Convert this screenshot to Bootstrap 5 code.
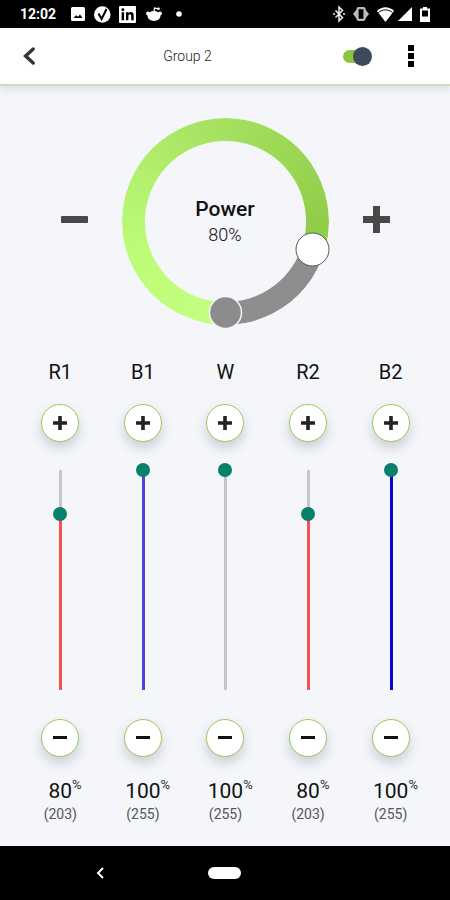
<!DOCTYPE html>
<html lang="en">
<head>
<meta charset="utf-8">
<meta name="viewport" content="width=device-width, initial-scale=1">
<title>Group 2</title>
<link href="https://cdn.jsdelivr.net/npm/bootstrap@5.3.0/dist/css/bootstrap.min.css" rel="stylesheet">
<style>
  body { font-family: Roboto, "Liberation Sans", sans-serif; background: #f4f6fa; color: #111; }
  svg { display: block; overflow: visible; }
  .status-bar { height: 28px; padding: 0 20px; background: #000; color: #fff; }
  .status-time { font-size: 14px; font-weight: 700; line-height: 20px; width: 51px; }
  .app-header { height: 58px; padding: 0 22px 0 12px; background: #fff; border-bottom: 2px solid #cfdcba; box-shadow: 0 3px 8px rgba(60, 80, 90, .14); }
  .icon-btn { width: 34px; height: 40px; }
  .group-title { font-size: 14px; font-weight: 300; line-height: 20px; color: #222; }
  .power-switch { appearance: none; position: relative; width: 26px; height: 13px; margin: 0 25px 0 14px; border-radius: 7px; background: #8bc53f; }
  .power-switch::before { content: ""; position: absolute; top: -3px; right: -3px; width: 19px; height: 19px; border-radius: 50%; background: #3c4a5b; }
  .power-switch:not(:checked) { background: #bbb; }
  .power-switch:not(:checked)::before { right: 10px; }
  .dial-row { padding: 32px 50px 0; }
  .step-btn { width: 48px; height: 48px; margin-bottom: 4px; }
  .dial { position: relative; width: 207px; height: 207px; }
  .dial::before { content: ""; position: absolute; inset: 0; border-radius: 50%;
    background: conic-gradient(from 180deg, #c5ff82 0, #bcfc77 20%, #a5e060 50%, #8dca45 80%, #8e8e8e 80%);
    -webkit-mask: radial-gradient(closest-side, transparent 80px, #000 81px);
    mask: radial-gradient(closest-side, transparent 80px, #000 81px); }
  .dial-knobs { position: absolute; inset: 0; }
  .dial-name { font-size: 21px; font-weight: 500; line-height: 28px; }
  .dial-value { font-size: 18px; font-weight: 300; line-height: 24px; margin-bottom: 2px; }
  .channels { padding: 33px 18px 0 19px; }
  .channel-name { font-size: 20px; line-height: 28px; margin-bottom: 18px; font-weight: 400; }
  .round-btn { width: 38px; height: 38px; border: 1px solid #9bca5c; border-radius: 50%; background: #fff; box-shadow: 0 6px 12px rgba(40, 50, 70, .2); }
  .slider-box { height: 234px; width: 38px; margin: 21px 0 22px; }
  .slider { appearance: none; flex: none; width: 234px; height: 14px; margin: 0; transform: rotate(-90deg);
    background: linear-gradient(to right, var(--tint) var(--level), #c6c6c8 var(--level)) center / 220px 3px no-repeat; }
  .slider::-webkit-slider-runnable-track { height: 14px; background: transparent; }
  .slider::-webkit-slider-thumb { appearance: none; width: 14px; height: 14px; border: 0; border-radius: 50%; background: #07806c; }
  .slider::-moz-range-thumb { width: 14px; height: 14px; border: 0; border-radius: 50%; background: #07806c; }
  .tint-red { --tint: #f4514f; }
  .tint-blue { --tint: #4b45e2; }
  .tint-white { --tint: #c6c6c8; }
  .tint-deep { --tint: #0b06d2; }
  .percent { font-size: 21px; font-weight: 400; line-height: 26px; margin-top: 21px; }
  .percent sup { display: inline-block; width: 0; font-size: 13px; line-height: 13px; top: -9px; color: #333; white-space: nowrap; }
  .raw-value { font-size: 14px; font-weight: 400; line-height: 20px; color: #555; }
  .system-nav { height: 54px; padding: 0 37px; background: #000; }
  .home-pill { width: 33px; height: 12px; border-radius: 6px; background: #fff; }
</style>
<script src="https://cdn.jsdelivr.net/npm/bootstrap@5.3.0/dist/js/bootstrap.bundle.min.js"></script>
</head>
<body>
<div class="d-flex flex-column min-vh-100">
  <div class="status-bar d-flex align-items-center">
    <span class="status-time">12:02</span>
    <svg width="14" height="14" viewBox="0 0 14 14" aria-hidden="true"><rect width="14" height="14" rx="1.5" fill="#fff"/><path d="M2.500 11l2.500-2.800 2 1.600 2-2.200L11.500 11z" fill="#000"/></svg>
    <svg class="ms-2" width="18" height="17" viewBox="-1 0 18 17" aria-hidden="true"><circle cx="8.300" cy="8.500" r="8.300" fill="#fff"/><path d="M4.500 7.500L7.600 13 12.500 3" fill="none" stroke="#000" stroke-width="2"/></svg>
    <svg class="ms-2" width="17" height="17" viewBox="0 0 17 17" aria-hidden="true"><rect width="17" height="17" rx="1" fill="#fff"/><path d="M2.600 6.300h2.500v8H2.600zM7 6.300h2.300v1.100c.5-.8 1.300-1.300 2.500-1.300 2.100 0 2.900 1.300 2.900 3.600v4.600h-2.500v-4.200c0-1.100-.3-1.900-1.300-1.900s-1.500.7-1.500 1.900v4.200H7z" fill="#000"/><circle cx="3.850" cy="3.800" r="1.450" fill="#000"/></svg>
    <svg class="ms-2" width="18" height="16" viewBox="-2 0 18 16" aria-hidden="true"><ellipse cx="8" cy="10" rx="6.500" ry="5" fill="#fff"/><circle cx="2" cy="7.500" r="2" fill="#fff"/><circle cx="14" cy="7.500" r="2" fill="#fff"/><path d="M8 6l.5-4 4 .8" fill="none" stroke="#fff" stroke-width="1.300"/><circle cx="12.500" cy="2.800" r="1.300" fill="#fff"/></svg>
    <svg class="ms-3" width="6" height="6" viewBox="5 0 6 6" aria-hidden="true"><circle cx="6" cy="3" r="2.800" fill="#fff"/></svg>
    <svg class="ms-auto" width="12" height="16" viewBox="0 0 12 16" aria-hidden="true"><path d="M2.500 4.500l7 7L6 15V1l3.500 3.500-7 7" fill="none" stroke="#eee" stroke-width="1.500"/><circle cx="1" cy="8" r="1" fill="#eee"/><circle cx="11" cy="8" r="1" fill="#eee"/></svg>
    <svg class="ms-2" width="16" height="14" viewBox="0 0 16 14" aria-hidden="true"><path d="M0 7l4-5v10zM16 7l-4-5v10z" fill="#bbb"/><rect x="4.500" y="1.200" width="7" height="11.600" rx="1" fill="#000" stroke="#bbb" stroke-width="2.200"/></svg>
    <svg class="ms-2" width="17" height="15" viewBox="0 0 17 15" aria-hidden="true"><path d="M0 4C5-1 12-1 17 4L8.500 15z" fill="#fff"/><path d="M1.500 5.500C5.500 2 11.500 2 15.500 5.500" fill="none" stroke="#000" stroke-width="1"/></svg>
    <svg class="ms-1" width="14" height="14" viewBox="1 0 14 14" aria-hidden="true"><path d="M15 0v14H1z" fill="#fff"/></svg>
    <svg class="ms-2" width="10" height="15" viewBox="0 0 10 15" aria-hidden="true"><path d="M3 0h4v1.500h3V15H0V1.500h3z" fill="#fff"/><rect x="2" y="3.500" width="6" height="6" fill="#000"/></svg>
  </div>

  <header class="app-header d-flex align-items-center">
    <button class="btn icon-btn border-0 p-0 d-flex align-items-center justify-content-center" type="button" aria-label="Back">
      <svg width="12" height="18" viewBox="0 0 12 18"><path d="M10.200 2L2.600 9l7.600 7" fill="none" stroke="#333" stroke-width="3.400" stroke-linecap="round"/></svg>
    </button>
    <h1 class="group-title flex-grow-1 text-center m-0">Group 2</h1>
    <input class="power-switch" type="checkbox" role="switch" aria-label="Group on or off" checked>
    <button class="btn icon-btn border-0 p-0 d-flex align-items-center justify-content-center" type="button" aria-label="More options">
      <svg width="6" height="22" viewBox="0 0 6 22"><path d="M0 0h6v6H0zM0 8h6v6H0zM0 16h6v6H0z" fill="#000"/></svg>
    </button>
  </header>

  <main class="flex-grow-1">
    <section class="dial-row d-flex align-items-center justify-content-between" aria-label="Power">
      <button class="btn step-btn border-0 p-0 d-flex align-items-center justify-content-center" type="button" aria-label="Decrease power">
        <svg width="27" height="27" viewBox="0 0 27 27"><rect y="10" width="27" height="7" rx="1" fill="#484848"/></svg>
      </button>
      <div class="dial d-flex flex-column align-items-center justify-content-center">
        <svg class="dial-knobs" width="207" height="207" viewBox="0 0 207 207" aria-hidden="true">
          <circle cx="103.500" cy="194.500" r="16" fill="#8c8c8c" stroke="#f4f6fa" stroke-width="1.500"/>
          <circle cx="190.500" cy="131.500" r="16.500" fill="#fff" stroke="#555" stroke-width="1"/>
        </svg>
        <div class="dial-name">Power</div>
        <div class="dial-value">80%</div>
      </div>
      <button class="btn step-btn border-0 p-0 d-flex align-items-center justify-content-center" type="button" aria-label="Increase power">
        <svg width="27" height="27" viewBox="0 0 27 27"><path d="M10 0h7v10h10v7H17v10h-7V17H0v-7h10z" fill="#484848"/></svg>
      </button>
    </section>

    <section class="channels">
      <div class="row row-cols-5 g-0">
        <div class="col d-flex flex-column align-items-center">
          <label class="channel-name" for="r1">R1</label>
          <button class="round-btn p-0 d-flex align-items-center justify-content-center" type="button" aria-label="Increase R1"><svg width="14" height="14" viewBox="0 0 14 14"><path d="M7 0v14M0 7h14" stroke="#222" stroke-width="3.600"/></svg></button>
          <div class="slider-box d-flex align-items-center justify-content-center"><input class="slider tint-red" id="r1" type="range" min="0" max="100" value="80" style="--level: 80%"></div>
          <button class="round-btn p-0 d-flex align-items-center justify-content-center" type="button" aria-label="Decrease R1"><svg width="14" height="14" viewBox="0 0 14 14"><path d="M0 6.500h14" stroke="#111" stroke-width="3"/></svg></button>
          <div class="percent">80<sup>%</sup></div>
          <div class="raw-value">(203)</div>
        </div>
        <div class="col d-flex flex-column align-items-center">
          <label class="channel-name" for="b1">B1</label>
          <button class="round-btn p-0 d-flex align-items-center justify-content-center" type="button" aria-label="Increase B1"><svg width="14" height="14" viewBox="0 0 14 14"><path d="M7 0v14M0 7h14" stroke="#222" stroke-width="3.600"/></svg></button>
          <div class="slider-box d-flex align-items-center justify-content-center"><input class="slider tint-blue" id="b1" type="range" min="0" max="100" value="100" style="--level: 100%"></div>
          <button class="round-btn p-0 d-flex align-items-center justify-content-center" type="button" aria-label="Decrease B1"><svg width="14" height="14" viewBox="0 0 14 14"><path d="M0 6.500h14" stroke="#111" stroke-width="3"/></svg></button>
          <div class="percent">100<sup>%</sup></div>
          <div class="raw-value">(255)</div>
        </div>
        <div class="col d-flex flex-column align-items-center">
          <label class="channel-name" for="w">W</label>
          <button class="round-btn p-0 d-flex align-items-center justify-content-center" type="button" aria-label="Increase W"><svg width="14" height="14" viewBox="0 0 14 14"><path d="M7 0v14M0 7h14" stroke="#222" stroke-width="3.600"/></svg></button>
          <div class="slider-box d-flex align-items-center justify-content-center"><input class="slider tint-white" id="w" type="range" min="0" max="100" value="100" style="--level: 100%"></div>
          <button class="round-btn p-0 d-flex align-items-center justify-content-center" type="button" aria-label="Decrease W"><svg width="14" height="14" viewBox="0 0 14 14"><path d="M0 6.500h14" stroke="#111" stroke-width="3"/></svg></button>
          <div class="percent">100<sup>%</sup></div>
          <div class="raw-value">(255)</div>
        </div>
        <div class="col d-flex flex-column align-items-center">
          <label class="channel-name" for="r2">R2</label>
          <button class="round-btn p-0 d-flex align-items-center justify-content-center" type="button" aria-label="Increase R2"><svg width="14" height="14" viewBox="0 0 14 14"><path d="M7 0v14M0 7h14" stroke="#222" stroke-width="3.600"/></svg></button>
          <div class="slider-box d-flex align-items-center justify-content-center"><input class="slider tint-red" id="r2" type="range" min="0" max="100" value="80" style="--level: 80%"></div>
          <button class="round-btn p-0 d-flex align-items-center justify-content-center" type="button" aria-label="Decrease R2"><svg width="14" height="14" viewBox="0 0 14 14"><path d="M0 6.500h14" stroke="#111" stroke-width="3"/></svg></button>
          <div class="percent">80<sup>%</sup></div>
          <div class="raw-value">(203)</div>
        </div>
        <div class="col d-flex flex-column align-items-center">
          <label class="channel-name" for="b2">B2</label>
          <button class="round-btn p-0 d-flex align-items-center justify-content-center" type="button" aria-label="Increase B2"><svg width="14" height="14" viewBox="0 0 14 14"><path d="M7 0v14M0 7h14" stroke="#222" stroke-width="3.600"/></svg></button>
          <div class="slider-box d-flex align-items-center justify-content-center"><input class="slider tint-deep" id="b2" type="range" min="0" max="100" value="100" style="--level: 100%"></div>
          <button class="round-btn p-0 d-flex align-items-center justify-content-center" type="button" aria-label="Decrease B2"><svg width="14" height="14" viewBox="0 0 14 14"><path d="M0 6.500h14" stroke="#111" stroke-width="3"/></svg></button>
          <div class="percent">100<sup>%</sup></div>
          <div class="raw-value">(255)</div>
        </div>
      </div>
    </section>
  </main>

  <nav class="system-nav d-flex align-items-center" aria-label="System">
    <div class="row row-cols-3 g-0 flex-grow-1 align-items-center">
      <div class="col d-flex justify-content-center"><button class="btn border-0 p-0" type="button" aria-label="System back"><svg width="8" height="12" viewBox="0 0 8 12"><path d="M7 1L2 6l5 5" fill="none" stroke="#fff" stroke-width="2"/></svg></button></div>
      <div class="col d-flex justify-content-center"><button class="home-pill border-0 p-0" type="button" aria-label="Home"></button></div>
    </div>
  </nav>
</div>
</body>
</html>
